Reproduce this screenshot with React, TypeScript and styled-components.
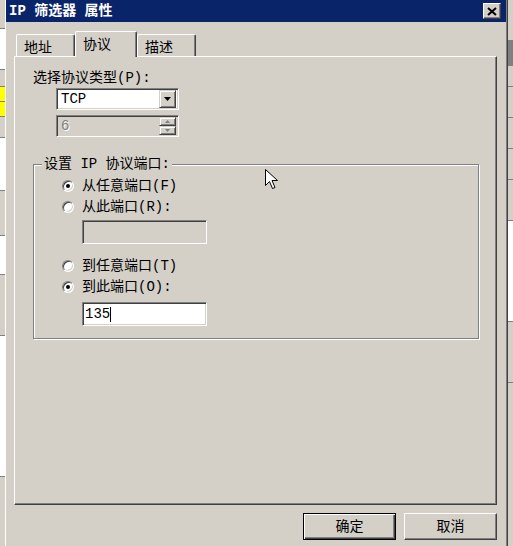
import styled, { createGlobalStyle } from "styled-components";

const GlobalStyle = createGlobalStyle`
  html, body {
    margin: 0;
    padding: 0;
    background: #d4d0c8;
  }
  body {
    font-family: "Liberation Mono", "Noto Sans CJK SC", monospace;
    font-size: 14px;
    line-height: 16px;
    color: #000;
  }
`;

const Page = styled.div`
  display: flex;
  width: 513px;
  height: 546px;
  overflow: hidden;
  position: relative;
`;

const Strip = styled.div<{ $w: number }>`
  width: ${(p) => p.$w}px;
  flex: none;
  display: flex;
  flex-direction: column;
  background: #d4d0c8;
`;

const StripBlock = styled.div<{ $h: number; $c: string }>`
  height: ${(p) => p.$h}px;
  background: ${(p) => p.$c};
  border-bottom: 1px solid #808080;
`;

const Dialog = styled.div`
  width: 503px;
  height: 546px;
  flex: none;
  box-sizing: border-box;
  background: #d4d0c8;
  border-left: 1px solid #fff;
  border-right: 1px solid #404040;
  padding-right: 1px;
  box-shadow: inset -1px 0 #808080;
  display: flex;
  flex-direction: column;
`;

const TitleBar = styled.div`
  height: 22px;
  background: #0a246a;
  display: flex;
  align-items: center;
  justify-content: space-between;
  padding: 0 5px 0 3px;
`;

const Title = styled.div`
  color: #fff;
  font-weight: bold;
  font-size: 14px;
  white-space: pre;
`;

const CloseButton = styled.div`
  width: 18px;
  height: 16px;
  box-sizing: border-box;
  background: #d4d0c8;
  border: 1px solid;
  border-color: #fff #404040 #404040 #fff;
  box-shadow: inset -1px -1px #808080;
  display: flex;
  align-items: center;
  justify-content: center;
`;

const Body = styled.div`
  padding: 9px 9px 0 8px;
  display: flex;
  flex-direction: column;
`;

const TabRow = styled.div`
  display: flex;
  align-items: flex-end;
  padding-left: 2px;
  height: 25px;
`;

const Tab = styled.div<{ $w: number; $active?: boolean }>`
  width: ${(p) => p.$w}px;
  height: ${(p) => (p.$active ? 26 : 22)}px;
  margin-bottom: ${(p) => (p.$active ? -1 : 0)}px;
  position: relative;
  z-index: ${(p) => (p.$active ? 1 : 0)};
  box-sizing: border-box;
  background: #d4d0c8;
  border-top: 1px solid #fff;
  border-left: 1px solid #fff;
  border-right: 1px solid #404040;
  border-radius: 2px 2px 0 0;
  box-shadow: inset -1px 0 #808080;
  padding: 5px 0 0 7px;
`;

const Panel = styled.div`
  height: 449px;
  box-sizing: border-box;
  border-top: 1px solid #fff;
  border-left: 1px solid #fff;
  border-right: 1px solid #404040;
  border-bottom: 1px solid #404040;
  box-shadow: inset -1px -1px #808080;
  padding: 13px 17px 0 18px;
  display: flex;
  flex-direction: column;
`;

const Label = styled.div`
  height: 16px;
  white-space: pre;
`;

const Combo = styled.div<{ $disabled?: boolean; $top: number }>`
  margin: ${(p) => p.$top}px 0 0 23px;
  width: 123px;
  height: 22px;
  box-sizing: border-box;
  border: 1px solid;
  border-color: #808080 #fff #fff #808080;
  box-shadow: inset 1px 1px #404040, inset -1px -1px #d4d0c8;
  background: ${(p) => (p.$disabled ? "#d4d0c8" : "#fff")};
  display: flex;
  align-items: center;
  padding: 2px 2px 2px 4px;
`;

const ComboText = styled.div<{ $disabled?: boolean }>`
  flex: 1;
  color: ${(p) => (p.$disabled ? "#808080" : "#000")};
  text-shadow: ${(p) => (p.$disabled ? "1px 1px #fff" : "none")};
`;

const DropButton = styled.div`
  width: 17px;
  height: 18px;
  box-sizing: border-box;
  background: #d4d0c8;
  border: 1px solid;
  border-color: #d4d0c8 #404040 #404040 #d4d0c8;
  box-shadow: inset 1px 1px #fff, inset -1px -1px #808080;
  display: flex;
  align-items: center;
  justify-content: center;
`;

const SpinStack = styled.div`
  width: 17px;
  height: 18px;
  display: flex;
  flex-direction: column;
`;

const SpinButton = styled.div`
  flex: 1;
  box-sizing: border-box;
  background: #d4d0c8;
  border: 1px solid;
  border-color: #d4d0c8 #404040 #404040 #d4d0c8;
  box-shadow: inset 1px 1px #fff, inset -1px -1px #808080;
  display: flex;
  align-items: center;
  justify-content: center;
`;

const Group = styled.fieldset`
  margin: 19px 0 0 0;
  padding: 0 0 12px 8px;
  border: 1px solid #808080;
  box-shadow: inset 1px 1px #fff, 1px 1px #fff;
  min-width: 0;
`;

const Legend = styled.legend`
  padding: 0 2px;
  background: #d4d0c8;
  height: 16px;
  white-space: pre;
`;

const GroupContent = styled.div`
  padding: 3px 0 0 20px;
  display: flex;
  flex-direction: column;
`;

const RadioRow = styled.div<{ $top?: number }>`
  height: 21px;
  margin-top: ${(p) => p.$top ?? 0}px;
  display: flex;
  align-items: center;
  gap: 8px;
  white-space: pre;
`;

const RadioCircle = styled.span<{ $checked?: boolean }>`
  width: 12px;
  height: 12px;
  box-sizing: border-box;
  border-radius: 50%;
  border: 1px solid;
  border-color: #808080 #fff #fff #808080;
  box-shadow: inset 1px 1px #404040, inset -1px -1px #d4d0c8;
  background: #fff;
  position: relative;
  &::after {
    content: "";
    display: ${(p) => (p.$checked ? "block" : "none")};
    position: absolute;
    left: 3px;
    top: 3px;
    width: 4px;
    height: 4px;
    border-radius: 50%;
    background: #000;
  }
`;

const PortField = styled.div<{ $disabled?: boolean; $top: number }>`
  margin: ${(p) => p.$top}px 0 0 20px;
  width: 125px;
  height: 24px;
  box-sizing: border-box;
  border: 1px solid;
  border-color: #808080 #fff #fff #808080;
  box-shadow: inset 1px 1px #404040, inset -1px -1px #d4d0c8;
  background: ${(p) => (p.$disabled ? "#d4d0c8" : "#fff")};
  display: flex;
  align-items: center;
  padding-left: 2px;
`;

const Caret = styled.span`
  width: 1px;
  height: 15px;
  background: #000;
`;

const ButtonRow = styled.div`
  display: flex;
  justify-content: flex-end;
  gap: 8px;
  margin-top: 8px;
`;

const Button = styled.div<{ $default?: boolean }>`
  width: 93px;
  height: 27px;
  box-sizing: border-box;
  background: #d4d0c8;
  display: flex;
  align-items: center;
  justify-content: center;
  border: 1px solid;
  border-color: ${(p) => (p.$default ? "#000" : "#fff #404040 #404040 #fff")};
  box-shadow: ${(p) =>
    p.$default
      ? "inset 1px 1px #fff, inset -1px -1px #404040, inset -2px -2px #808080"
      : "inset -1px -1px #808080"};
`;

const Cursor = styled.svg`
  position: absolute;
  left: 265px;
  top: 169px;
`;

const Arrow = ({ color = "#000" }: { color?: string }) => (
  <svg width="7" height="4" viewBox="0 0 7 4">
    <path d="M0 0h7L3.5 4z" fill={color} />
  </svg>
);

const App = () => {
  return (
    <Page>
      <GlobalStyle />
      <Strip $w={5}>
        <StripBlock $h={28} $c="#d4d0c8" />
        <StripBlock $h={40} $c="#ffffff" />
        <StripBlock $h={16} $c="#d4d0c8" />
        <StripBlock $h={14} $c="#ffff00" />
        <StripBlock $h={14} $c="#ffff00" />
        <StripBlock $h={20} $c="#d4d0c8" />
        <StripBlock $h={52} $c="#ffffff" />
        <StripBlock $h={44} $c="#d4d0c8" />
        <StripBlock $h={38} $c="#ffffff" />
        <StripBlock $h={60} $c="#d4d0c8" />
        <StripBlock $h={140} $c="#ffffff" />
      </Strip>
      <Dialog>
        <TitleBar>
          <Title>IP 筛选器 属性</Title>
          <CloseButton>
            <svg width="10" height="9" viewBox="0 0 10 9">
              <path d="M1 1l8 7M9 1l-8 7" stroke="#000" strokeWidth="2" />
            </svg>
          </CloseButton>
        </TitleBar>
        <Body>
          <TabRow>
            <Tab $w={59}>地址</Tab>
            <Tab $w={62} $active>协议</Tab>
            <Tab $w={59}>描述</Tab>
          </TabRow>
          <Panel>
            <Label>选择协议类型(P):</Label>
            <Combo $top={2}>
              <ComboText>TCP</ComboText>
              <DropButton>
                <Arrow />
              </DropButton>
            </Combo>
            <Combo $top={5} $disabled>
              <ComboText $disabled>6</ComboText>
              <SpinStack>
                <SpinButton>
                  <svg width="5" height="3" viewBox="0 0 5 3">
                    <path d="M0 3h5L2.5 0z" fill="#808080" />
                  </svg>
                </SpinButton>
                <SpinButton>
                  <svg width="5" height="3" viewBox="0 0 5 3">
                    <path d="M0 0h5L2.5 3z" fill="#808080" />
                  </svg>
                </SpinButton>
              </SpinStack>
            </Combo>
            <Group>
              <Legend>设置 IP 协议端口:</Legend>
              <GroupContent>
                <RadioRow>
                  <RadioCircle $checked />
                  从任意端口(F)
                </RadioRow>
                <RadioRow>
                  <RadioCircle />
                  从此端口(R):
                </RadioRow>
                <PortField $top={3} $disabled />
                <RadioRow $top={11}>
                  <RadioCircle />
                  到任意端口(T)
                </RadioRow>
                <RadioRow>
                  <RadioCircle $checked />
                  到此端口(O):
                </RadioRow>
                <PortField $top={5}>
                  135
                  <Caret />
                </PortField>
              </GroupContent>
            </Group>
          </Panel>
          <ButtonRow>
            <Button $default>确定</Button>
            <Button>取消</Button>
          </ButtonRow>
        </Body>
      </Dialog>
      <Strip $w={5}>
        <StripBlock $h={40} $c="#d4d0c8" />
        <StripBlock $h={24} $c="#808080" />
        <StripBlock $h={20} $c="#d4d0c8" />
        <StripBlock $h={30} $c="#d4d0c8" />
        <StripBlock $h={30} $c="#d4d0c8" />
        <StripBlock $h={30} $c="#d4d0c8" />
        <StripBlock $h={40} $c="#d4d0c8" />
        <StripBlock $h={100} $c="#ffffff" />
        <StripBlock $h={60} $c="#d4d0c8" />
      </Strip>
      <Cursor width="13" height="21" viewBox="0 0 13 21">
        <path
          d="M0.5 0.5v16l4-4 3 7 2.5-1-3-7h5.5z"
          fill="#fff"
          stroke="#000"
          strokeWidth="1"
          strokeLinejoin="miter"
        />
      </Cursor>
    </Page>
  );
};

export default App;
